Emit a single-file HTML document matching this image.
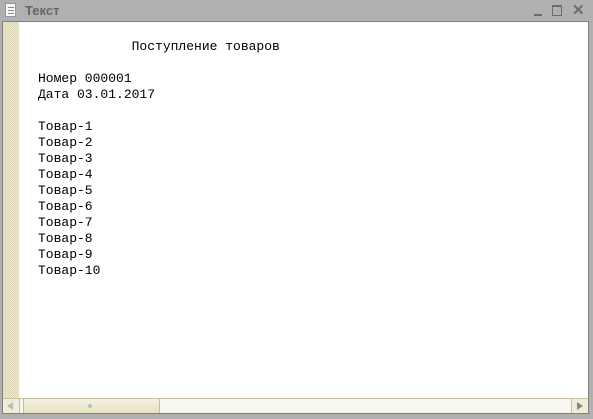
<!DOCTYPE html><html><head><meta charset="utf-8"><style>
body{margin:0;width:593px;height:419px;overflow:hidden;background:#b0b0b0;font-family:"Liberation Sans",sans-serif;position:relative}
.tb{position:absolute;left:0;top:0;width:593px;height:21px;background:#b0b0b0}
.title{position:absolute;left:25px;top:3px;font-weight:bold;font-size:13px;color:#666}
.ic{position:absolute;left:5px;top:3px;width:11px;height:14px;background:#f4f6f8;border:1px solid #8a9aaa;box-sizing:border-box}
.ic i{position:absolute;left:2px;width:6px;height:1px;background:#7a8ea4}
.frame{position:absolute;left:2px;top:21px;width:587px;height:393px;border:1px solid #808080;background:#fff;box-sizing:border-box}
.gut{position:absolute;left:3px;top:22px;width:16px;height:376px;background:#ece8d4;background-image:linear-gradient(45deg,#dcd6b8 25%,transparent 25%,transparent 75%,#dcd6b8 75%),linear-gradient(45deg,#dcd6b8 25%,transparent 25%,transparent 75%,#dcd6b8 75%);background-size:2px 2px;background-position:0 0,1px 1px}
pre{position:absolute;left:38px;top:39px;margin:0;font-family:"Liberation Mono",monospace;font-size:13px;line-height:16px;color:#000}
.sb{position:absolute;left:3px;top:398px;width:585px;height:15px;background:#f7f6ef;border-top:1px solid #c9bf9a;box-sizing:border-box}
.btn{position:absolute;top:0;width:16px;height:14px;background:#f0edd8}
.thumb{position:absolute;left:20px;top:0;width:135px;height:14px;background:linear-gradient(#f5f2de,#e7e2c2);border-left:1px solid #c9bf9a;border-right:1px solid #c9bf9a}
</style></head><body>
<div class="tb"><div class="ic"><i style="top:3px"></i><i style="top:6px"></i><i style="top:9px"></i></div><div class="title">Текст</div>
<div style="position:absolute;left:534px;top:14px;width:8px;height:2px;background:#6e6e6e"></div>
<div style="position:absolute;left:552px;top:5px;width:10px;height:11px;border:1px solid #6e6e6e;border-top-width:2px;box-sizing:border-box"></div>
<div style="position:absolute;left:572px;top:1px;font-size:15px;color:#6e6e6e;font-weight:bold">✕</div></div>
<div class="frame"></div>
<div class="gut"></div>
<pre>            Поступление товаров

Номер 000001
Дата 03.01.2017

Товар-1
Товар-2
Товар-3
Товар-4
Товар-5
Товар-6
Товар-7
Товар-8
Товар-9
Товар-10</pre>
<div class="sb"><div class="btn" style="left:0;border-right:1px solid #c9bf9a"><span style="position:absolute;left:4px;top:3px;border-right:6px solid #bbb;border-top:4px solid transparent;border-bottom:4px solid transparent"></span></div>
<div class="thumb"><span style="position:absolute;left:64px;top:5px;width:4px;height:4px;border-radius:50%;background:#bbb"></span></div>
<div class="btn" style="right:0;border-left:1px solid #c9bf9a;background:#efecd9"><span style="position:absolute;left:5px;top:3px;border-left:6px solid #888;border-top:4px solid transparent;border-bottom:4px solid transparent"></span></div></div>
</body></html>
